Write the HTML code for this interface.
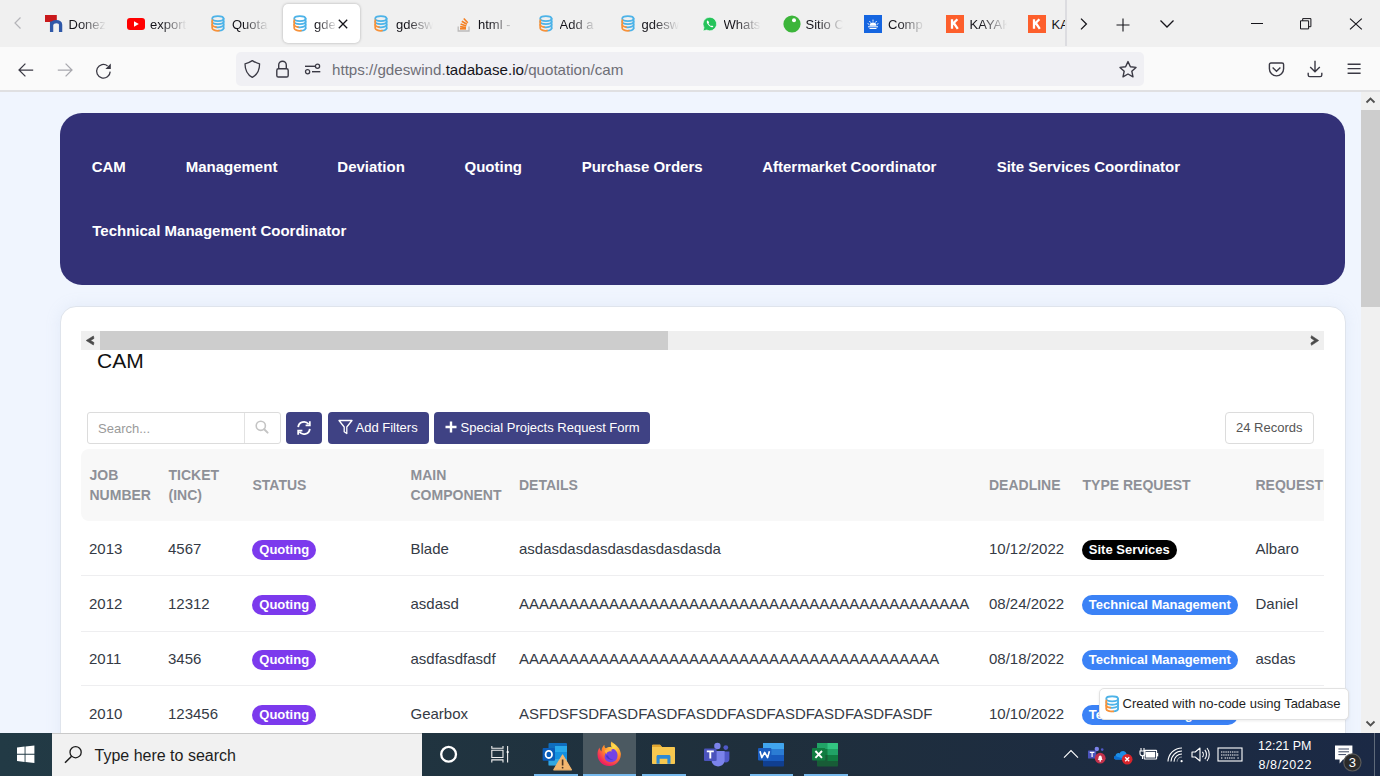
<!DOCTYPE html>
<html><head><meta charset="utf-8">
<style>
*{margin:0;padding:0;box-sizing:border-box}
html,body{width:1380px;height:776px;overflow:hidden;font-family:"Liberation Sans",sans-serif;background:#f0f5fe;position:relative}
.a{position:absolute;white-space:nowrap;line-height:1}
#tabs{position:absolute;left:0;top:0;width:1380px;height:47px;background:#f0f0f0}
#nav{position:absolute;left:0;top:47px;width:1380px;height:45px;background:#fafafa;border-bottom:2px solid #e0e0e2}
#task{position:absolute;left:0;top:733px;width:1380px;height:43px;background:linear-gradient(90deg,#223a45 0%,#203440 30%,#1f2f3c 55%,#1b2945 100%)}
.tt{position:absolute;top:17.5px;width:37px;font-size:13px;line-height:13px;height:16px;color:#15141a;white-space:nowrap;overflow:hidden;-webkit-mask-image:linear-gradient(90deg,#000 30%,transparent 100%);mask-image:linear-gradient(90deg,#000 30%,transparent 100%)}
/* page */
.navbox{position:absolute;left:59.5px;top:112.7px;width:1285.8px;height:172px;background:#333177;border-radius:22px}
.mi{position:absolute;white-space:nowrap;line-height:1;font-size:15px;font-weight:bold;color:#fff}
.card{position:absolute;left:60px;top:306px;width:1286px;height:460px;background:#fff;border-radius:16px;border:1px solid #dfe4ec;box-shadow:0 0 16px rgba(150,170,210,.13)}
.hs{position:absolute;left:81px;top:331px;width:1243px;height:19px;background:#efefef}
.thumb{position:absolute;left:100px;top:331px;width:568px;height:19px;background:#cdcdcd}
.btn{position:absolute;top:412px;height:32px;background:#3f4284;border-radius:4px;color:#fff;font-size:13px}
.th{position:absolute;font-size:14px;font-weight:bold;color:#8e9097;line-height:20px;white-space:nowrap}
.td{position:absolute;font-size:15px;color:#343a45;line-height:1;white-space:nowrap}
.pill{position:absolute;height:19.5px;border-radius:10px;color:#fff;font-size:13px;font-weight:bold;line-height:19.5px;padding:0 7.3px;white-space:nowrap}
.sep{position:absolute;left:81px;width:1243px;height:1px;background:#eeeef0}
.vs{position:absolute;left:1361px;top:91px;width:19px;height:642px;background:#f0f0f0}
</style></head><body>
<!-- ============ PAGE ============ -->
<div class="navbox"></div>
<div class="mi" style="left:91.7px;top:159.3px">CAM</div>
<div class="mi" style="left:185.7px;top:159.3px">Management</div>
<div class="mi" style="left:337.3px;top:159.3px">Deviation</div>
<div class="mi" style="left:464.5px;top:159.3px">Quoting</div>
<div class="mi" style="left:581.7px;top:159.3px">Purchase Orders</div>
<div class="mi" style="left:762.2px;top:159.3px">Aftermarket Coordinator</div>
<div class="mi" style="left:996.7px;top:159.3px">Site Services Coordinator</div>
<div class="mi" style="left:92.3px;top:223.4px">Technical Management Coordinator</div>

<div class="card"></div>
<div class="hs"></div>
<div class="thumb"></div>
<svg class="a" style="left:81px;top:331px" width="19" height="19" viewBox="0 0 19 19"><path d="M12.4 5 L5.2 9.5 L12.4 14 L13 11.6 L9.6 9.5 L13 7.4 Z" fill="#4a4a4a" stroke="#4a4a4a" stroke-width=".6" stroke-linejoin="round"/></svg>
<svg class="a" style="left:1305px;top:331px" width="19" height="19" viewBox="0 0 19 19"><path d="M6.5 4.7 L13.7 9.5 L6.5 14.3 L5.9 12 L9.5 9.5 L5.9 7 Z" fill="#4a4a4a" stroke="#4a4a4a" stroke-width=".6" stroke-linejoin="round"/></svg>

<div class="a" style="left:97px;top:350px;font-size:21px;color:#111">CAM</div>

<!-- search -->
<div class="a" style="left:87px;top:412px;width:194px;height:32px;border:1px solid #dcdcdc;border-radius:3px;background:#fff"></div>
<div class="a" style="left:244px;top:413px;width:1px;height:30px;background:#e2e2e2"></div>
<div class="a" style="left:98px;top:421.5px;font-size:13px;color:#9a9a9a">Search...</div>
<svg class="a" style="left:254px;top:419px" width="16" height="16" viewBox="0 0 16 16"><circle cx="6.8" cy="6.8" r="4.6" fill="none" stroke="#c4c4c4" stroke-width="1.6"/><path d="M10.2 10.2 L13.6 13.6" stroke="#c4c4c4" stroke-width="2" stroke-linecap="round"/></svg>
<div class="btn" style="left:286px;width:36px"></div>
<svg class="a" style="left:295px;top:419px" width="18" height="18" viewBox="0 0 18 18"><path d="M3.2 8.2 A5.8 5.8 0 0 1 13.6 5.2" fill="none" stroke="#fff" stroke-width="1.8"/><path d="M14.8 2.2 L14.8 6.4 L10.6 6.4" fill="none" stroke="#fff" stroke-width="1.8"/><path d="M14.8 9.8 A5.8 5.8 0 0 1 4.4 12.8" fill="none" stroke="#fff" stroke-width="1.8"/><path d="M3.2 15.8 L3.2 11.6 L7.4 11.6" fill="none" stroke="#fff" stroke-width="1.8"/></svg>
<div class="btn" style="left:328px;width:101px"></div>
<svg class="a" style="left:338px;top:419px" width="15" height="16" viewBox="0 0 15 16"><path d="M1 1.5 H14 L8.8 8 V14.5 L6.2 12.8 V8 Z" fill="none" stroke="#fff" stroke-width="1.3" stroke-linejoin="round"/></svg>
<div class="a" style="left:355.5px;top:421px;font-size:13px;color:#fff">Add Filters</div>
<div class="btn" style="left:434px;width:216px"></div>
<svg class="a" style="left:445px;top:421px" width="12" height="12" viewBox="0 0 12 12"><path d="M6 0.5 V11.5 M0.5 6 H11.5" stroke="#fff" stroke-width="2.4"/></svg>
<div class="a" style="left:460.5px;top:421px;font-size:13px;color:#fff">Special Projects Request Form</div>

<div class="a" style="left:1225px;top:412px;width:89px;height:32px;border:1px solid #dcdcdc;border-radius:4px;background:#fff"></div>
<div class="a" style="left:1236px;top:421px;font-size:13px;color:#555">24 Records</div>

<!-- table header -->
<div class="a" style="left:81px;top:449px;width:1243px;height:72px;background:#f8f8f8;border-radius:8px 0 0 8px"></div>
<div class="th" style="left:89.5px;top:464.5px">JOB<br>NUMBER</div>
<div class="th" style="left:168.5px;top:464.5px">TICKET<br>(INC)</div>
<div class="th" style="left:252.5px;top:474.5px">STATUS</div>
<div class="th" style="left:410.5px;top:464.5px">MAIN<br>COMPONENT</div>
<div class="th" style="left:519px;top:474.5px">DETAILS</div>
<div class="th" style="left:989px;top:474.5px">DEADLINE</div>
<div class="th" style="left:1082.5px;top:474.5px">TYPE REQUEST</div>
<div class="a" style="left:1255.5px;top:449px;width:68.5px;height:72px;overflow:hidden"><div class="th" style="left:0;top:25.5px">REQUESTED BY</div></div>

<!-- rows -->
<div class="td" style="left:89px;top:541.2px">2013</div>
<div class="td" style="left:168px;top:541.2px">4567</div>
<div class="pill" style="left:252px;top:540px;background:#7c3aed">Quoting</div>
<div class="td" style="left:410.5px;top:541.2px">Blade</div>
<div class="td" style="left:519px;top:541.2px">asdasdasdasdasdasdasdasda</div>
<div class="td" style="left:989px;top:541.2px">10/12/2022</div>
<div class="pill" style="left:1081.5px;top:540px;background:#000">Site Services</div>
<div class="td" style="left:1255.5px;top:541.2px">Albaro</div>
<div class="sep" style="top:575px"></div>

<div class="td" style="left:89px;top:596.2px">2012</div>
<div class="td" style="left:168px;top:596.2px">12312</div>
<div class="pill" style="left:252px;top:595px;background:#7c3aed">Quoting</div>
<div class="td" style="left:410.5px;top:596.2px">asdasd</div>
<div class="td" style="left:519px;top:596.2px">AAAAAAAAAAAAAAAAAAAAAAAAAAAAAAAAAAAAAAAAAAAAA</div>
<div class="td" style="left:989px;top:596.2px">08/24/2022</div>
<div class="pill" style="left:1081.5px;top:595px;background:#3b82f6">Technical Management</div>
<div class="td" style="left:1255.5px;top:596.2px">Daniel</div>
<div class="sep" style="top:630.5px"></div>

<div class="td" style="left:89px;top:651.2px">2011</div>
<div class="td" style="left:168px;top:651.2px">3456</div>
<div class="pill" style="left:252px;top:650px;background:#7c3aed">Quoting</div>
<div class="td" style="left:410.5px;top:651.2px">asdfasdfasdf</div>
<div class="td" style="left:519px;top:651.2px">AAAAAAAAAAAAAAAAAAAAAAAAAAAAAAAAAAAAAAAAAA</div>
<div class="td" style="left:989px;top:651.2px">08/18/2022</div>
<div class="pill" style="left:1081.5px;top:650px;background:#3b82f6">Technical Management</div>
<div class="td" style="left:1255.5px;top:651.2px">asdas</div>
<div class="sep" style="top:685px"></div>

<div class="td" style="left:89px;top:706.2px">2010</div>
<div class="td" style="left:168px;top:706.2px">123456</div>
<div class="pill" style="left:252px;top:705px;background:#7c3aed">Quoting</div>
<div class="td" style="left:410.5px;top:706.2px">Gearbox</div>
<div class="td" style="left:519px;top:706.2px">ASFDSFSDFASDFASDFASDDFASDFASDFASDFASDFASDF</div>
<div class="td" style="left:989px;top:706.2px">10/10/2022</div>
<div class="pill" style="left:1081.5px;top:705px;background:#3b82f6">Technical Management</div>

<!-- tadabase badge -->
<div class="a" style="left:1099px;top:688px;width:250px;height:32px;background:#fff;border:1px solid #e2e2e2;border-radius:5px;box-shadow:0 1px 3px rgba(0,0,0,.08)"></div>
<svg class="a" style="left:1104.5px;top:694.5px" width="14.5" height="18" viewBox="0 0 14 17"><use href="#db"/></svg>
<div class="a" style="left:1122.5px;top:696.8px;font-size:13px;color:#1e1e1e">Created with no-code using Tadabase</div>

<!-- page vertical scrollbar -->
<div class="vs"></div>
<div class="a" style="left:1361px;top:110px;width:19px;height:197px;background:#cdcdcd"></div>
<svg class="a" style="left:1361px;top:92px" width="19" height="17" viewBox="0 0 19 17"><path d="M5.5 10.5 L9.5 6.5 L13.5 10.5" fill="none" stroke="#505050" stroke-width="1.8"/></svg>
<svg class="a" style="left:1361px;top:715px" width="19" height="17" viewBox="0 0 19 17"><path d="M5.5 6.5 L9.5 10.5 L13.5 6.5" fill="none" stroke="#505050" stroke-width="1.8"/></svg>

<!-- ============ CHROME ============ -->
<div id="tabs"></div>
<svg width="0" height="0" style="position:absolute">
 <defs>
  <symbol id="db" viewBox="0 0 14 17">
   <g fill="none" stroke-width="1.75" stroke-linecap="round">
    <ellipse cx="6.9" cy="3.5" rx="5.7" ry="2.5" stroke="#4db3e8"/>
    <path d="M12.6 3.5 V13.2" stroke="#4db3e8"/>
    <path d="M1.2 6.6 A5.7 2.6 0 0 0 12.6 6.6" stroke="#4db3e8"/>
    <path d="M5 12.1 A5.7 2.6 0 0 0 12.6 9.9" stroke="#4db3e8"/>
    <path d="M8 15.7 A5.7 2.6 0 0 0 12.6 13.2" stroke="#4db3e8"/>
    <path d="M1.2 5 V13.2 A5.7 2.6 0 0 0 8 15.7" stroke="#f7923a"/>
    <path d="M1.2 9.9 A5.7 2.6 0 0 0 5 12.1" stroke="#f7923a"/>
   </g>
  </symbol>
  <symbol id="kayak" viewBox="0 0 18 18"><rect width="18" height="18" fill="#fd5f2c"/><path d="M6 4.2 V13.8 M6 9.6 L11.4 4.2 M7.8 8 L11.8 13.8" stroke="#fff" stroke-width="2.3" fill="none"/></symbol>
 </defs>
</svg>
<!-- tab strip -->
<svg class="a" style="left:10px;top:15px" width="16" height="16" viewBox="0 0 16 16"><path d="M10.5 2.5 L5 8 L10.5 13.5" fill="none" stroke="#b4b4b8" stroke-width="1.2"/></svg>

<svg class="a" style="left:45px;top:15px" width="18" height="17" viewBox="0 0 18 17"><rect x="0" y="0" width="11.8" height="7" fill="#c9191b"/><path d="M6.6 17 V6.5 M6.6 9.5 C7.5 6 15.6 5.5 15.6 9.8 V17" fill="none" stroke="#2f58a8" stroke-width="3.3"/></svg>
<div class="tt" style="left:68.5px">Donez</div>
<svg class="a" style="left:127px;top:17.5px" width="18" height="12" viewBox="0 0 18 12"><rect width="18" height="12" rx="3" fill="#f00"/><path d="M7 3.3 V8.7 L11.8 6 Z" fill="#fff"/></svg>
<div class="tt" style="left:150px">export</div>
<svg class="a" style="left:211px;top:15px" width="14" height="17"><use href="#db"/></svg>
<div class="tt" style="left:232px">Quota</div>

<div class="a" style="left:282.5px;top:4px;width:77.5px;height:39px;background:#fff;border-radius:5px;box-shadow:0 0 3px rgba(0,0,0,.28)"></div>
<svg class="a" style="left:292.6px;top:15px" width="14" height="17"><use href="#db"/></svg>
<div class="tt" style="left:314px;width:22px;-webkit-mask-image:linear-gradient(90deg,#000 10%,rgba(0,0,0,.2) 90%,transparent 100%)">gdeswind</div>
<svg class="a" style="left:337px;top:18px" width="12" height="12" viewBox="0 0 12 12"><path d="M1.8 1.8 L10.2 10.2 M10.2 1.8 L1.8 10.2" stroke="#15141a" stroke-width="1.3"/></svg>

<svg class="a" style="left:374.3px;top:15px" width="14" height="17"><use href="#db"/></svg>
<div class="tt" style="left:396px">gdesw</div>
<svg class="a" style="left:457px;top:16px" width="14" height="16" viewBox="0 0 14 16"><path d="M1.2 10.5 V15 H12 V10.5" fill="none" stroke="#bcbbbb" stroke-width="1.3"/><g stroke="#f48024" stroke-width="1.6"><path d="M3 12.8 H9"/><path d="M3.1 10.6 L9 11.6"/><path d="M3.6 8 L9.3 10"/><path d="M4.8 5.2 L9.9 8.3"/><path d="M6.8 2.5 L10.8 6.8"/></g></svg>
<div class="tt" style="left:478px">html - How</div>
<svg class="a" style="left:538.6px;top:15px" width="14" height="17"><use href="#db"/></svg>
<div class="tt" style="left:559.5px">Add a</div>
<svg class="a" style="left:620.6px;top:15px" width="14" height="17"><use href="#db"/></svg>
<div class="tt" style="left:641.5px">gdesw</div>
<svg class="a" style="left:702px;top:16px" width="16" height="16" viewBox="0 0 16 16"><path d="M8 1.2 A6.8 6.8 0 1 1 4.6 14 L1 15 L2 11.5 A6.8 6.8 0 0 1 8 1.2 Z" fill="#25c35a" stroke="#fff" stroke-width=".6"/><path d="M5.2 4.6 C4.6 5.3 4.6 6.6 5.6 8.1 C6.6 9.6 8.2 11 9.8 11.3 C10.6 11.4 11.2 10.9 11.3 10.3 L9.9 9.4 L9.2 10 C8.2 9.6 7 8.5 6.5 7.4 L7.1 6.6 L6.3 5 Z" fill="#fff"/></svg>
<div class="tt" style="left:723.5px">Whats</div>
<svg class="a" style="left:782.5px;top:15px" width="18" height="18" viewBox="0 0 18 18"><circle cx="9" cy="9" r="8.6" fill="#3cb53a"/><circle cx="11" cy="5.3" r="2" fill="#fff"/></svg>
<div class="tt" style="left:805.5px">Sitio C</div>
<svg class="a" style="left:864.4px;top:15px" width="18" height="18" viewBox="0 0 18 18"><rect width="18" height="18" fill="#1565e0"/><path d="M4 11.8 H14 M5.5 13.5 H12.5" stroke="#fff" stroke-width="1"/><path d="M5.6 10.8 A3.4 3.4 0 0 1 12.4 10.8 Z" fill="#fff"/><g stroke="#fff" stroke-width=".9"><path d="M9 4.6 V6.6 M5.4 6 L6.5 7.6 M12.6 6 L11.5 7.6 M3.6 8.6 L5.2 9.4 M14.4 8.6 L12.8 9.4"/></g></svg>
<div class="tt" style="left:888px">Comp</div>
<svg class="a" style="left:946.2px;top:15px" width="18" height="18"><use href="#kayak"/></svg>
<div class="tt" style="left:969.5px">KAYAK</div>
<svg class="a" style="left:1028.4px;top:15px" width="18" height="18"><use href="#kayak"/></svg>
<div class="tt" style="left:1051.5px;width:14px;-webkit-mask-image:none">KAYAK</div>
<div class="a" style="left:1065px;top:0;width:2px;height:46px;background:#dcdce0"></div>
<svg class="a" style="left:1076px;top:16px" width="16" height="16" viewBox="0 0 16 16"><path d="M5 2.6 L10.4 8 L5 13.4" fill="none" stroke="#15141a" stroke-width="1.3"/></svg>
<svg class="a" style="left:1115px;top:16.5px" width="16" height="16" viewBox="0 0 16 16"><path d="M8 1.5 V14.5 M1.5 8 H14.5" stroke="#15141a" stroke-width="1.1"/></svg>
<svg class="a" style="left:1158.5px;top:16px" width="16" height="16" viewBox="0 0 16 16"><path d="M1.5 4.5 L8 11 L14.5 4.5" fill="none" stroke="#15141a" stroke-width="1.3"/></svg>
<div class="a" style="left:1251px;top:23px;width:11.5px;height:1px;background:#15141a"></div>
<svg class="a" style="left:1300px;top:18px" width="12" height="12" viewBox="0 0 12 12"><path d="M0.5 2.8 H8.6 V10.9 H0.5 Z M2.7 2.8 V0.6 H10.9 V8.7 H8.6" fill="none" stroke="#15141a" stroke-width="1"/></svg>
<svg class="a" style="left:1349px;top:18px" width="14" height="12" viewBox="0 0 14 12"><path d="M1 .6 L12.8 11.4 M12.8 .6 L1 11.4" stroke="#15141a" stroke-width="1.1"/></svg>

<div id="nav"></div>
<!-- nav buttons -->
<svg class="a" style="left:17px;top:61.5px" width="18" height="16" viewBox="0 0 18 16"><path d="M8.4 1.6 L2 8 L8.4 14.4 M2 8 H16.2" fill="none" stroke="#3a3944" stroke-width="1.25"/></svg>
<svg class="a" style="left:56px;top:61.5px" width="18" height="16" viewBox="0 0 18 16"><path d="M9.6 1.6 L16 8 L9.6 14.4 M16 8 H1.8" fill="none" stroke="#a8a8ae" stroke-width="1.25"/></svg>
<svg class="a" style="left:95px;top:62px" width="18" height="18" viewBox="0 0 18 18"><path d="M15.2 9.6 A6.8 6.8 0 1 1 12.6 3.9" fill="none" stroke="#3a3944" stroke-width="1.3"/><path d="M15.8 1.6 V7 H10.4 Z" fill="#3a3944"/></svg>

<div class="a" style="left:236px;top:52px;width:908px;height:34px;background:#f0f0f4;border-radius:5px"></div>
<svg class="a" style="left:243px;top:59px" width="18" height="20" viewBox="0 0 18 20"><path d="M9.3 1.6 C6.8 3.2 4.6 4.2 2 4.8 C2 11 4 15.6 9.3 18.4 C14.6 15.6 16.6 11 16.6 4.8 C14 4.2 11.8 3.2 9.3 1.6 Z" fill="none" stroke="#3a3944" stroke-width="1.3" stroke-linejoin="round"/></svg>
<svg class="a" style="left:275px;top:59px" width="15" height="20" viewBox="0 0 15 20"><path d="M3.7 9.6 V6 A3.8 3.8 0 0 1 11.3 6 V9.6" fill="none" stroke="#3a3944" stroke-width="1.4"/><rect x="1.8" y="9.8" width="11.4" height="8.2" rx="1.6" fill="none" stroke="#3a3944" stroke-width="1.4"/></svg>
<svg class="a" style="left:304px;top:62px" width="18" height="14" viewBox="0 0 18 14"><path d="M1 4.3 H11" stroke="#3a3944" stroke-width="1.4"/><circle cx="13.5" cy="4.3" r="2.1" fill="none" stroke="#3a3944" stroke-width="1.3"/><path d="M8 9.7 H16.3" stroke="#3a3944" stroke-width="1.4"/><circle cx="3.6" cy="9.7" r="2.1" fill="none" stroke="#3a3944" stroke-width="1.3"/></svg>
<div class="a" style="left:332px;top:61.5px;font-size:15.15px;color:#6e6e76">https://gdeswind.<span style="color:#15141a">tadabase.io</span>/quotation/cam</div>
<svg class="a" style="left:1118px;top:60px" width="20" height="19" viewBox="0 0 20 19"><path d="M10 1.6 L12.4 6.8 L18 7.4 L13.8 11.2 L15 16.8 L10 14 L5 16.8 L6.2 11.2 L2 7.4 L7.6 6.8 Z" fill="none" stroke="#3a3944" stroke-width="1.4" stroke-linejoin="round"/></svg>
<svg class="a" style="left:1268px;top:61.5px" width="17" height="15" viewBox="0 0 17 15"><path d="M1.4 2.6 C1.4 1.6 2 1 3 1 H14 C15 1 15.6 1.6 15.6 2.6 V6.8 A7.1 7.1 0 0 1 1.4 6.8 Z" fill="none" stroke="#3a3944" stroke-width="1.4"/><path d="M4.6 5.6 L8.5 9.2 L12.4 5.6" fill="none" stroke="#3a3944" stroke-width="1.4"/></svg>
<svg class="a" style="left:1307px;top:59.5px" width="16" height="18" viewBox="0 0 16 18"><path d="M8 .8 V11.6 M3.2 7 L8 11.8 L12.8 7" fill="none" stroke="#3a3944" stroke-width="1.4"/><path d="M1.2 12.8 V15 C1.2 16 1.8 16.6 2.8 16.6 H13.2 C14.2 16.6 14.8 16 14.8 15 V12.8" fill="none" stroke="#3a3944" stroke-width="1.4"/></svg>
<svg class="a" style="left:1346px;top:62px" width="16" height="13" viewBox="0 0 16 13"><path d="M1.6 2.2 H14.6 M1.6 6.6 H14.6 M1.6 11.2 H14.6" stroke="#3a3944" stroke-width="1.4"/></svg>


<!-- ============ TASKBAR ============ -->
<div id="task"></div>
<!-- start -->
<svg class="a" style="left:16px;top:745px" width="19" height="19" viewBox="0 0 19 19"><path d="M1 2.6 L8.6 1.6 V8.8 H1 Z M9.5 1.5 L18.4 0.4 V8.8 H9.5 Z M1 9.7 H8.6 V16.9 L1 15.9 Z M9.5 9.7 H18.4 V18.1 L9.5 17 Z" fill="#fff"/></svg>
<div class="a" style="left:52px;top:733px;width:370px;height:43px;background:#f1f1f1;border-top:1px solid #c9c9c9"></div>
<svg class="a" style="left:64px;top:745px" width="19" height="19" viewBox="0 0 19 19"><circle cx="11.6" cy="7.2" r="5.6" fill="none" stroke="#1a1a1a" stroke-width="1.3"/><path d="M7.6 11.2 L1 17.8" stroke="#1a1a1a" stroke-width="1.5"/></svg>
<div class="a" style="left:94.5px;top:747.5px;font-size:16px;color:#1d1d1d">Type here to search</div>
<!-- cortana -->
<svg class="a" style="left:439px;top:745px" width="19" height="19" viewBox="0 0 19 19"><circle cx="9.6" cy="9.3" r="7.4" fill="none" stroke="#fff" stroke-width="2.3"/></svg>
<!-- task view -->
<svg class="a" style="left:490px;top:745px" width="20" height="19" viewBox="0 0 20 19"><g fill="none" stroke="#f0f0f0" stroke-width="1.1"><path d="M1.8 1 V3.3 H13 V1"/><path d="M1.8 5.3 H13 V12.5 H1.8 Z"/><path d="M1.8 17.6 V14.9 H13 V17.6"/><path d="M17.6 1 V17.6"/></g><rect x="16.7" y="6.1" width="1.9" height="1.9" fill="#fff"/></svg>
<!-- outlook -->
<svg class="a" style="left:542px;top:742px" width="30" height="29" viewBox="0 0 30 29"><rect x="6.5" y="1" width="18.5" height="22.5" rx="1" fill="#0f6cbd"/><rect x="13" y="4" width="12" height="6" fill="#28a8ea"/><rect x="13" y="10" width="12" height="7" fill="#1490df"/><rect x="6.5" y="17" width="18.5" height="6.5" fill="#50d9ff" opacity=".55"/><rect x="0.6" y="6" width="12.4" height="12.8" rx="1" fill="#0a5cb8"/><ellipse cx="6.8" cy="12.4" rx="3.2" ry="3.6" fill="none" stroke="#fff" stroke-width="1.8"/><path d="M20.6 13 L29.4 27.8 H11.8 Z" fill="#f3b66e" stroke="#f3b66e" stroke-width="1.2" stroke-linejoin="round"/><path d="M20.6 17.5 V23.5" stroke="#4a3420" stroke-width="1.6"/><circle cx="20.6" cy="25.7" r=".9" fill="#4a3420"/></svg>
<div class="a" style="left:534px;top:774px;width:44px;height:2px;background:#76b9ed"></div>
<!-- firefox (active) -->
<div class="a" style="left:583px;top:733px;width:53px;height:43px;background:#4b5961"></div>
<div class="a" style="left:583px;top:774px;width:53px;height:2px;background:#76b9ed"></div>
<svg class="a" style="left:596px;top:741px" width="27" height="26" viewBox="0 0 27 26">
 <defs><radialGradient id="ffg" cx="0.7" cy="0.2" r="1"><stop offset="0" stop-color="#ffe34f"/><stop offset=".45" stop-color="#ff8a2b"/><stop offset=".8" stop-color="#f0245e"/><stop offset="1" stop-color="#d3186e"/></radialGradient></defs>
 <path d="M15.5 0.6 C17.5 3 23.5 5 24.8 12.2 C25.6 19 20 25 13.3 25 C6.5 25 1.5 19.8 1.5 13.4 C1.5 10.6 2.2 8.4 3.6 6.6 C3.6 8.6 4.6 9.6 5.5 10.4 C5.5 6.5 7.4 4.4 8.6 4 C8.2 5.8 9 6.8 10 7.3 C11.6 6 14.6 5.6 15.6 6.4 C14.6 4.2 14.6 2.4 15.5 0.6 Z" fill="url(#ffg)"/>
 <path d="M17.8 8 C21 9.6 22.5 14 21 17.4 C19.4 20.8 15 22 11.8 20.6 C8.6 19 8 15.6 9.2 13 C10.6 10.4 13 9.8 15.8 10.6 C14.4 8.8 16 7.6 17.8 8 Z" fill="#7542e5"/>
 <path d="M9.8 14.6 C10.6 18.4 14.6 19.6 17.4 18 C14.6 18.2 12.6 17 12 14.4 Z" fill="#3b38c9" opacity=".8"/>
 <path d="M8.6 10 C10.4 8.2 13.6 8.2 15.6 9.8 C13 9.8 11 11 10.4 13 C10 12 9.2 11 8.6 10 Z" fill="#ffb340"/>
</svg>
<!-- explorer -->
<svg class="a" style="left:651px;top:744px" width="25" height="21" viewBox="0 0 25 21"><path d="M1 2 C1 1.2 1.5 0.8 2.3 0.8 H9 L11 3 H23 C23.6 3 24 3.4 24 4 V19 C24 19.6 23.6 20 23 20 H2 C1.4 20 1 19.6 1 19 Z" fill="#f8c84f"/><path d="M1 2 C1 1.2 1.5 0.8 2.3 0.8 H9 L11 3 H1 Z" fill="#e3a630"/><path d="M5.5 19.8 V12.6 C5.5 11.6 6.2 11 7 11 H18 C18.8 11 19.5 11.6 19.5 12.6 V19.8 H16.4 V14.8 H8.6 V19.8 Z" fill="#2d8ad6"/></svg>
<div class="a" style="left:642px;top:774px;width:44px;height:2px;background:#76b9ed"></div>
<!-- teams -->
<svg class="a" style="left:703px;top:742px" width="28" height="25" viewBox="0 0 28 25"><circle cx="14.4" cy="4" r="3.2" fill="#7b83eb"/><circle cx="22.8" cy="5.6" r="2.4" fill="#5059c9"/><path d="M19.6 9.4 H26.4 V17 C26.4 19.2 24.8 20.6 22.9 20.6 C21 20.6 19.6 19.2 19.6 17 Z" fill="#5059c9"/><path d="M8.6 9 H21.6 V18.4 C21.6 22 18.6 24.4 15.1 24.4 C11.6 24.4 8.6 22 8.6 18.4 Z" fill="#7b83eb"/><rect x="1" y="6.4" width="12.6" height="12.6" rx="1" fill="#4b53bc"/><path d="M3.8 9.4 H10.8 M7.3 9.4 V16.4" stroke="#fff" stroke-width="1.9"/></svg>
<!-- word -->
<svg class="a" style="left:757px;top:742px" width="28" height="25" viewBox="0 0 28 25"><path d="M6 1 H26 C26.6 1 27 1.4 27 2 V7 H6 Z" fill="#41a5ee"/><rect x="6" y="7" width="21" height="6" fill="#2b7cd3"/><rect x="6" y="13" width="21" height="6" fill="#185abd"/><path d="M6 19 H27 V23.4 C27 24 26.6 24.4 26 24.4 H7 C6.4 24.4 6 24 6 23.4 Z" fill="#103f91"/><rect x="1" y="6" width="13.4" height="12.6" rx="1" fill="#1a5cbe"/><path d="M3 9.2 L4.8 15.6 L7.7 10.4 L10.6 15.6 L12.4 9.2" fill="none" stroke="#fff" stroke-width="1.6" stroke-linejoin="round"/></svg>
<div class="a" style="left:750px;top:774px;width:43px;height:2px;background:#76b9ed"></div>
<!-- excel -->
<svg class="a" style="left:811px;top:742px" width="28" height="25" viewBox="0 0 28 25"><path d="M6 1 H26 C26.6 1 27 1.4 27 2 V7 H6 Z" fill="#21a366"/><path d="M16.5 1 H26 C26.6 1 27 1.4 27 2 V7 H16.5 Z" fill="#33c481"/><rect x="6" y="7" width="21" height="6" fill="#107c41"/><rect x="16.5" y="7" width="10.5" height="6" fill="#21a366"/><path d="M6 13 H27 V23.4 C27 24 26.6 24.4 26 24.4 H7 C6.4 24.4 6 24 6 23.4 Z" fill="#185c37"/><rect x="16.5" y="13" width="10.5" height="6" fill="#107c41"/><rect x="1" y="6" width="13.4" height="12.6" rx="1" fill="#107c41"/><path d="M4.4 9 L11 15.8 M11 9 L4.4 15.8" stroke="#fff" stroke-width="1.9"/></svg>
<div class="a" style="left:804px;top:774px;width:44px;height:2px;background:#76b9ed"></div>
<!-- tray -->
<svg class="a" style="left:1063px;top:749px" width="16" height="10" viewBox="0 0 16 10"><path d="M1 8.6 L8 1.6 L15 8.6" fill="none" stroke="#fff" stroke-width="1.1"/></svg>
<svg class="a" style="left:1087px;top:746px" width="20" height="18" viewBox="0 0 20 18"><circle cx="9.8" cy="3" r="2.2" fill="#7b83eb"/><circle cx="15.2" cy="3.6" r="1.3" fill="#5059c9"/><rect x="1" y="4.4" width="8.2" height="8.2" rx=".7" fill="#4b53bc"/><path d="M2.8 6.4 H7.4 M5.1 6.4 V11" stroke="#fff" stroke-width="1.2"/><circle cx="13.2" cy="12.2" r="5.4" fill="#c4314b"/><path d="M10.8 14 C11.6 13.2 11.4 11 12 10.2 C12.6 9.4 13.8 9.4 14.4 10.2 C15 11 14.8 13.2 15.6 14 Z" fill="#fff"/><circle cx="13.2" cy="14.8" r=".9" fill="#fff"/></svg>
<svg class="a" style="left:1113px;top:747px" width="21" height="18" viewBox="0 0 21 18"><path d="M2.8 12.5 C0.8 12.5 0.5 9.2 2.6 8.8 C2.8 6.4 5 5.4 6.8 6.4 C7.8 3.2 12.6 3.2 13.4 6.8 C15.4 6.8 16 9 15 10.2 L14 12.5 Z" fill="#1c8ee8"/><path d="M2.8 12.5 C0.8 12.5 0.5 9.2 2.6 8.8 C4 10 8 11 14 12.5 Z" fill="#0a6ed4"/><circle cx="14.2" cy="12.2" r="5.3" fill="#d9252b"/><path d="M12.2 10.2 L16.2 14.2 M16.2 10.2 L12.2 14.2" stroke="#fff" stroke-width="1.3"/></svg>
<svg class="a" style="left:1139px;top:747px" width="20" height="14" viewBox="0 0 20 14"><path d="M2 1 V4 M5 1 V4 M1 4 H6 V6.5 C6 8 4.8 8.8 3.5 8.8 C2.2 8.8 1 8 1 6.5 Z M3.5 8.8 V12" fill="none" stroke="#fff" stroke-width="1.1"/><rect x="5.2" y="3.4" width="12.4" height="8.6" rx=".6" fill="none" stroke="#fff" stroke-width="1.1"/><rect x="6.6" y="4.8" width="9.6" height="5.8" fill="#fff"/><rect x="17.8" y="6" width="1.4" height="3.4" fill="#fff"/></svg>
<svg class="a" style="left:1167px;top:747px" width="17" height="16" viewBox="0 0 17 16"><g fill="none" stroke="#fff" stroke-width="1.1"><path d="M1 14.6 A14 14 0 0 1 15 1"/><path d="M4 14.6 A11 11 0 0 1 15 4"/><path d="M7 14.6 A8 8 0 0 1 15 7" /><path d="M10 14.6 A5 5 0 0 1 15 10" opacity=".5"/></g><circle cx="14.6" cy="14.2" r="1.1" fill="#fff"/></svg>
<svg class="a" style="left:1191px;top:747px" width="19" height="15" viewBox="0 0 19 15"><path d="M1 5 H4.2 L9 1 V14 L4.2 10 H1 Z" fill="none" stroke="#fff" stroke-width="1.1" stroke-linejoin="round"/><path d="M11.4 4.8 C12.6 6.2 12.6 8.8 11.4 10.2 M13.8 2.8 C16 5.2 16 9.8 13.8 12.2 M16 1 C19 4.4 19 10.6 16 14" fill="none" stroke="#fff" stroke-width="1.1"/></svg>
<svg class="a" style="left:1217px;top:746.5px" width="26" height="15" viewBox="0 0 26 15"><rect x="1" y="1" width="24" height="13" fill="none" stroke="#fff" stroke-width="1.1"/><path d="M4 5 H22 M4 8 H22 M7.6 11 H18.4 M4 11 H5.6 M20.4 11 H22" stroke="#fff" stroke-width="1.2" stroke-dasharray="1.4 .8"/></svg>
<div class="a" style="left:1258px;top:739.5px;font-size:12.5px;color:#fff;line-height:1">12:21 PM</div>
<div class="a" style="left:1258.5px;top:759px;font-size:12.5px;color:#fff;line-height:1;letter-spacing:.6px">8/8/2022</div>
<svg class="a" style="left:1334px;top:744px" width="30" height="30" viewBox="0 0 30 30"><path d="M1 1.5 H18.4 V15.6 H9 L5.6 19.4 V15.6 H1 Z" fill="#fff"/><path d="M4.4 5 H15 M4.4 7.8 H15 M4.4 10.6 H12" stroke="#3b4660" stroke-width="1"/><circle cx="18.4" cy="18.4" r="8.6" fill="#2a2a2a" stroke="#5a5a5a" stroke-width="1.2"/><text x="18.4" y="23" text-anchor="middle" font-family="Liberation Sans" font-size="13" fill="#fff">3</text></svg>
<div class="a" style="left:1374px;top:733px;width:1px;height:43px;background:#5f6a7a"></div>

</body></html>
